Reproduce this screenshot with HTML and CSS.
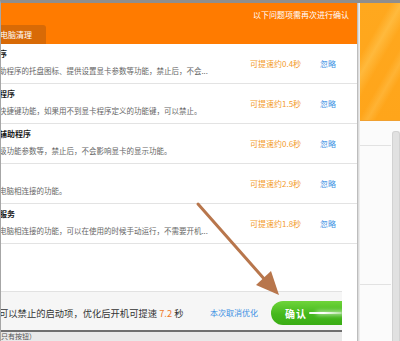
FILE: index.html
```html
<!DOCTYPE html>
<html lang="zh-CN">
<head>
<meta charset="utf-8">
<title>启动项优化确认</title>
<link rel="stylesheet" href="styles.css">
</head>
<body>
<div class="frame">
  <div class="dialog">
    <div class="header">
      <div class="header-note">以下问题项需再次进行确认</div>
      <div class="tab">电脑清理</div>
    </div>
    <div class="list">
      <div class="row">
        <div class="info">
          <div class="title">序</div>
          <div class="desc">助程序的托盘图标、提供设置显卡参数等功能，禁止后，不会...</div>
        </div>
        <div class="speed">可提速约0.4秒</div>
        <div class="ignore">忽略</div>
      </div>
      <div class="row">
        <div class="info">
          <div class="title">程序</div>
          <div class="desc">快捷键功能，如果用不到显卡程序定义的功能键，可以禁止。</div>
        </div>
        <div class="speed">可提速约1.5秒</div>
        <div class="ignore">忽略</div>
      </div>
      <div class="row">
        <div class="info">
          <div class="title">辅助程序</div>
          <div class="desc">级功能参数等，禁止后，不会影响显卡的显示功能。</div>
        </div>
        <div class="speed">可提速约0.6秒</div>
        <div class="ignore">忽略</div>
      </div>
      <div class="row">
        <div class="info">
          <div class="title"></div>
          <div class="desc">电脑相连接的功能。</div>
        </div>
        <div class="speed">可提速约2.9秒</div>
        <div class="ignore">忽略</div>
      </div>
      <div class="row">
        <div class="info">
          <div class="title">服务</div>
          <div class="desc">电脑相连接的功能，可以在使用的时候手动运行，不需要开机...</div>
        </div>
        <div class="speed">可提速约1.8秒</div>
        <div class="ignore">忽略</div>
      </div>
    </div>
    <div class="footer">
      <div class="foot">
        <span class="summary">可以禁止的启动项，优化后开机可提速 <em class="num">7.2</em> 秒</span>
        <span class="cancel">本次取消优化</span>
        <span class="confirm"><b>确认</b><i class="swoosh"></i></span>
      </div>
      <div class="foot-gap"></div>
    </div>
    <div class="strip">
      <div class="strip-main">只有按钮）</div>
      <div class="foot-gap"></div>
    </div>
  </div>
  <div class="bgapp">
    <div class="bg-top"></div>
    <div class="bg-body">
      <div class="bg-lines">
        <div class="bg-line a"></div>
        <div class="bg-line b"></div>
      </div>
      <div class="scroll"></div>
    </div>
  </div>
  <svg class="arrow" width="400" height="341" viewBox="0 0 400 341">
    <line x1="198" y1="204" x2="266" y2="281" stroke="#b8764c" stroke-width="3" stroke-linecap="round"/>
    <polygon points="279,295 256,285 271,271" fill="#b8764c"/>
  </svg>
</div>
</body>
</html>
```
FILE: styles.css
```css
html, body {
  margin: 0;
  padding: 0;
}
body {
  width: 400px;
  height: 341px;
  overflow: hidden;
  font-family: "Noto Sans CJK SC", "Noto Sans", sans-serif;
  background: #fff;
}
.frame {
  position: relative;
  display: flex;
  width: 400px;
  height: 341px;
  box-sizing: border-box;
  border-top: 3px solid #8e8e8e;
  border-left: 1px solid #a6a6a6;
  overflow: hidden;
}
.dialog {
  width: 356px;
  flex: none;
  display: flex;
  flex-direction: column;
  background: #fff;
  border-right: 1px solid #bdbdbd;
  box-shadow: 1px 0 0 #dcdcdc, 2px 0 0 #ececec;
  overflow: hidden;
  z-index: 1;
}
.header {
  height: 41px;
  flex: none;
  background: #ff7b00;
  display: flex;
  flex-direction: column;
  justify-content: space-between;
}
.header-note {
  font-size: 8px;
  line-height: 12px;
  padding-top: 6px;
  color: #fff;
  text-align: right;
  padding-right: 8px;
}
.tab {
  align-self: flex-start;
  width: 45px;
  height: 19px;
  box-sizing: border-box;
  background: #d86a06;
  border-radius: 0 3px 0 0;
  color: #fff;
  font-size: 8px;
  line-height: 20px;
  text-indent: -1px;
  white-space: nowrap;
}
.list {
  flex: 1;
  background: #fff;
}
.row {
  height: 40px;
  box-sizing: border-box;
  border-bottom: 1px solid #e3e3e3;
  display: grid;
  grid-template-columns: 249px 70px 1fr;
  align-items: center;
  font-size: 8px;
}
.info {
  align-self: start;
  padding-top: 3px;
  margin-left: -2px;
  overflow: hidden;
}
.title {
  height: 14px;
  line-height: 14px;
  color: #1a1a1a;
  font-weight: 700;
  margin-bottom: 3px;
}
.desc {
  font-size: 7.5px;
  line-height: 14px;
  color: #666;
  white-space: nowrap;
  overflow: hidden;
}
.speed {
  color: #f39a2a;
  white-space: nowrap;
}
.ignore {
  color: #3b8fe3;
}
.footer {
  height: 39px;
  flex: none;
  display: flex;
}
.foot {
  flex: 1;
  display: flex;
  align-items: center;
  padding-top: 3px;
  box-sizing: border-box;
  background: #f6f6f6;
  border-top: 1px solid #e2e2e2;
  overflow: hidden;
}
.foot-gap {
  width: 15px;
  flex: none;
  background: #fff;
}
.summary {
  font-size: 9.3px;
  color: #333;
  margin-left: -2px;
  white-space: nowrap;
}
.num {
  font-style: normal;
  color: #f07a2a;
}
.cancel {
  margin-left: auto;
  margin-right: 13px;
  font-size: 8px;
  color: #3b8fe3;
  white-space: nowrap;
}
.confirm {
  flex: none;
  width: 71px;
  height: 24px;
  border-radius: 12px 0 0 12px;
  background: linear-gradient(#6fd43a, #45b81d 55%, #3aad15);
  display: flex;
  align-items: center;
  padding-left: 14px;
  box-sizing: border-box;
  margin-top: 1px;
}
.confirm b {
  color: #fff;
  font-size: 10px;
  letter-spacing: 1px;
  white-space: nowrap;
}
.swoosh {
  flex: 1;
  height: 2px;
  margin-left: 2px;
  background: linear-gradient(to right, rgba(255,255,255,.95), #fff 45%, rgba(255,255,255,.55));
  box-shadow: 8px 0 4px 1px rgba(255,255,255,.6);
  border-radius: 1px;
}
.strip {
  height: 11px;
  flex: none;
  display: flex;
}
.strip-main {
  flex: 1;
  border-top: 2px solid #6f6f6f;
  background: #e9e9e9;
  font-size: 7px;
  line-height: 8px;
  color: #555;
  overflow: hidden;
  white-space: nowrap;
}
.bgapp {
  flex: 1;
  display: flex;
  flex-direction: column;
  background: #fbfbfb;
}
.bg-top {
  height: 117px;
  flex: none;
  background:
    linear-gradient(120deg, rgba(255,255,255,0) 30%, rgba(255,220,120,.35) 40%, rgba(255,255,255,0) 52%),
    linear-gradient(120deg, rgba(255,255,255,0) 62%, rgba(255,210,110,.3) 70%, rgba(255,255,255,0) 78%),
    linear-gradient(#ffa81e, #ffa51a);
  border-bottom: 1px solid #f0a030;
}
.bg-body {
  flex: 1;
  display: flex;
}
.bg-lines {
  flex: 1;
}
.bg-line.a {
  height: 24px;
  border-bottom: 1px solid #e2e2e2;
}
.bg-line.b {
  height: 138px;
  border-bottom: 1px solid #e2e2e2;
}
.scroll {
  width: 6px;
  flex: none;
  margin-top: 10px;
  margin-left: 1px;
  background: #e1e1e1;
  border: 1px solid #d2d2d2;
  border-bottom: none;
  border-radius: 3px 3px 0 0;
}
.arrow {
  position: absolute;
  left: -1px;
  top: -3px;
  z-index: 5;
  pointer-events: none;
}
```
